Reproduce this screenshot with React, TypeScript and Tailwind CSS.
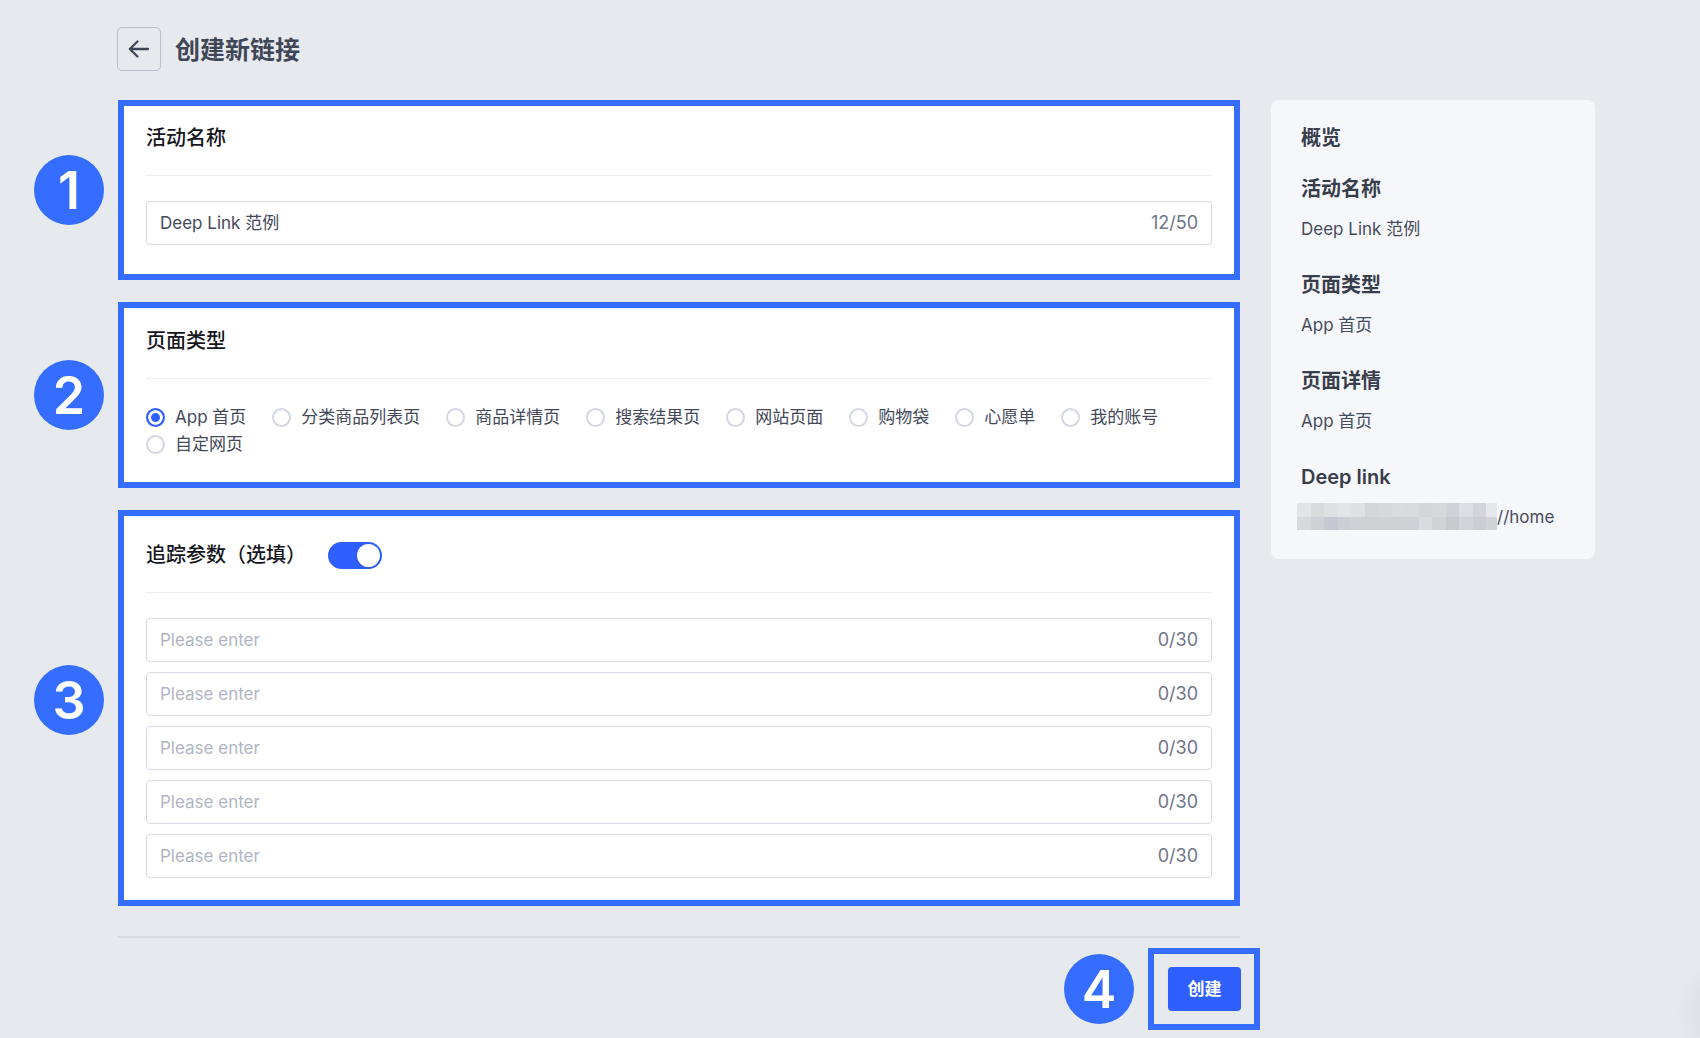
import { ReactNode, useState } from 'react'

const PAGE_TYPES = [
    'App 首页',
    '分类商品列表页',
    '商品详情页',
    '搜索结果页',
    '网站页面',
    '购物袋',
    '心愿单',
    '我的账号',
    '自定网页',
]

// two rows of grey blocks that hide the app scheme
const MOSAIC = [
    ['#e3e4e8', '#d9dade', '#dfe0e4', '#e3e4e8', '#dfe0e4', '#d5d6da', '#d6d8db', '#d9dcdf', '#d8dadd', '#d3d5d8', '#d6d8da', '#cfd2d6', '#dddee3', '#d2d4d9', '#e6e7eb'],
    ['#d8d9dd', '#d0d1d6', '#c5c8d0', '#cdced4', '#d0d1d6', '#cfd1d5', '#d0d1d5', '#cfd1d5', '#d0d1d6', '#dadbe0', '#d1d3d7', '#c7cacf', '#d3d4d9', '#cccdd2', '#d2d3d9'],
]

function Badge({ children }: { children: ReactNode }) {
    return (
        <span className="flex size-[70px] shrink-0 items-center justify-center rounded-full bg-[#346dff] pt-[2px] text-[52px] leading-none font-semibold text-white">
            {children}
        </span>
    )
}

type StepProps = {
    step: number
    className: string
    badgeClassName?: string
    title: string
    action?: ReactNode
    children: ReactNode
}

function Step({ step, className, badgeClassName = '', title, action, children }: StepProps) {
    return (
        <div className="flex items-center gap-[14px]">
            <div className={badgeClassName}>
                <Badge>{step}</Badge>
            </div>
            <section className={`min-w-0 flex-1 border-6 border-[#346dff] bg-white px-[22px] ${className}`}>
                <div className="mb-[25px] flex items-center gap-[22px] border-b border-[#ebecef] pb-[23px]">
                    <h2 className="text-[20px] leading-7 font-medium text-[#15171c]">{title}</h2>
                    {action}
                </div>
                {children}
            </section>
        </div>
    )
}

type CountedInputProps = {
    label: string
    value: string
    max: number
    onChange: (value: string) => void
}

function CountedInput({ label, value, max, onChange }: CountedInputProps) {
    return (
        <label className="flex h-11 items-center rounded-[4px] border border-[#d5d9e1] px-[13px]">
            <input
                type="text"
                aria-label={label}
                placeholder="Please enter"
                maxLength={max}
                value={value}
                onChange={(e) => onChange(e.target.value)}
                className="min-w-0 flex-1 bg-transparent text-[17px] leading-6 text-[#434959] outline-none placeholder:text-[#b0b5c4]"
            />
            <span className="text-[18px] leading-6 text-[#6e7587]">{value.length}/{max}</span>
        </label>
    )
}

function SummaryItem({ title, children }: { title: string, children: ReactNode }) {
    return (
        <div>
            <dt className="text-[20px] leading-7 font-semibold text-[#383e4c]">{title}</dt>
            <dd className="mt-[14px] flex items-center text-[17px] leading-6 text-[#464c5b]">{children}</dd>
        </div>
    )
}

function Mosaic() {
    return (
        <svg className="-mt-[5px] -mb-[3px] -ml-1 shrink-0" width="200" height="27" viewBox="0 0 200 27" shapeRendering="crispEdges" aria-hidden="true">
            {MOSAIC.map((row, y) => row.map((fill, x) => (
                <rect key={`${x}-${y}`} x={x * 13.5} y={y * 13.5} width="13.5" height="13.5" fill={fill} />
            )))}
        </svg>
    )
}

export default function App() {
    const [name, setName] = useState('Deep Link 范例')
    const [pageType, setPageType] = useState(PAGE_TYPES[0])
    const [tracking, setTracking] = useState(true)
    const [params, setParams] = useState(['', '', '', '', ''])

    return (
        <div className="min-h-screen overflow-hidden bg-[#e6eaef] pt-[27px] pr-[105px] pb-2 pl-[34px] font-[Inter,'Noto_Sans_CJK_SC',sans-serif]">
            <header className="mb-[29px] flex items-center gap-[14px] pl-[83px]">
                <button type="button" aria-label="返回" className="flex size-11 items-center justify-center rounded-[5px] border border-[#b9bfcb] text-[#3f4656]">
                    <svg width="22" height="20" viewBox="0 0 22 20" fill="none" stroke="currentColor" strokeWidth="2.300" strokeLinecap="round" strokeLinejoin="round">
                        <path d="M20 10H2M9.500 2.500 1.800 10l7.700 7.500" />
                    </svg>
                </button>
                <h1 className="pt-[2px] text-[25px] leading-8 font-semibold text-[#3f4656]">创建新链接</h1>
            </header>

            <div className="flex items-start gap-[31px]">
                <main className="min-w-0 flex-1">
                    <div className="flex flex-col gap-[22px]">
                        <Step step={1} title="活动名称" className="pt-[18px] pb-[29px]">
                            <CountedInput label="活动名称" value={name} max={50} onChange={setName} />
                        </Step>

                        <Step step={2} title="页面类型" className="pt-[19px] pb-6">
                            <div role="radiogroup" aria-label="页面类型" className="flex flex-wrap gap-x-[26px]">
                                {PAGE_TYPES.map((type) => (
                                    <label key={type} className="flex items-center gap-[10px] text-[17px] leading-[27px] text-[#434959]">
                                        <input
                                            type="radio"
                                            name="pageType"
                                            checked={pageType === type}
                                            onChange={() => setPageType(type)}
                                            className="size-[19px] appearance-none rounded-full border-2 border-[#d3d7e1] bg-white checked:border-[#2f5fff] checked:bg-[#2f5fff] checked:shadow-[inset_0_0_0_3px_white]"
                                        />
                                        {type}
                                    </label>
                                ))}
                            </div>
                        </Step>

                        <Step
                            step={3}
                            title="追踪参数（选填）"
                            className="pt-[25px] pb-[22px]"
                            badgeClassName="mb-4"
                            action={
                                <label className="relative flex h-[27px] w-[54px] items-center">
                                    <input
                                        type="checkbox"
                                        role="switch"
                                        aria-label="追踪参数"
                                        checked={tracking}
                                        onChange={(e) => setTracking(e.target.checked)}
                                        className="peer h-full w-full appearance-none rounded-full bg-[#c3c8d3] checked:bg-[#2f5fff]"
                                    />
                                    <span className="pointer-events-none absolute left-[2px] size-[23px] rounded-full bg-white shadow-sm peer-checked:left-[29px]" />
                                </label>
                            }
                        >
                            <div className="flex flex-col gap-[10px]">
                                {params.map((param, i) => (
                                    <CountedInput
                                        key={i}
                                        label={`追踪参数 ${i + 1}`}
                                        value={param}
                                        max={30}
                                        onChange={(value) => setParams(params.map((p, j) => (j === i ? value : p)))}
                                    />
                                ))}
                            </div>
                        </Step>
                    </div>

                    <footer className="mt-[30px] ml-[83px] border-t-2 border-[#d6dae1]">
                        <div className="-mr-5 flex items-center justify-end gap-[14px] pt-[10px]">
                            <Badge>4</Badge>
                            <div className="border-6 border-[#346dff] py-[13px] pr-[13px] pl-[14px]">
                                <button type="button" className="h-11 w-[73px] rounded-[4px] bg-[#2f5fff] text-[17px] leading-6 font-semibold text-white">
                                    创建
                                </button>
                            </div>
                        </div>
                    </footer>
                </main>

                <aside className="w-[324px] shrink-0 rounded-[8px] bg-[#f6f7fb] px-[30px] pt-6 pb-[30px]">
                    <h2 className="mb-[23px] text-[20px] leading-7 font-semibold text-[#383e4c]">概览</h2>
                    <dl className="flex flex-col gap-[30px]">
                        <SummaryItem title="活动名称">{name}</SummaryItem>
                        <SummaryItem title="页面类型">{pageType}</SummaryItem>
                        <SummaryItem title="页面详情">{pageType}</SummaryItem>
                        <SummaryItem title="Deep link">
                            <Mosaic />
                            //home
                        </SummaryItem>
                    </dl>
                </aside>
            </div>

            {/* shadow of the chat launcher docked past the edge */}
            <div className="fixed -right-[64px] -bottom-1 size-[60px] rounded-full shadow-[0_0_44px_rgba(0,0,0,0.12)]" />
        </div>
    )
}
